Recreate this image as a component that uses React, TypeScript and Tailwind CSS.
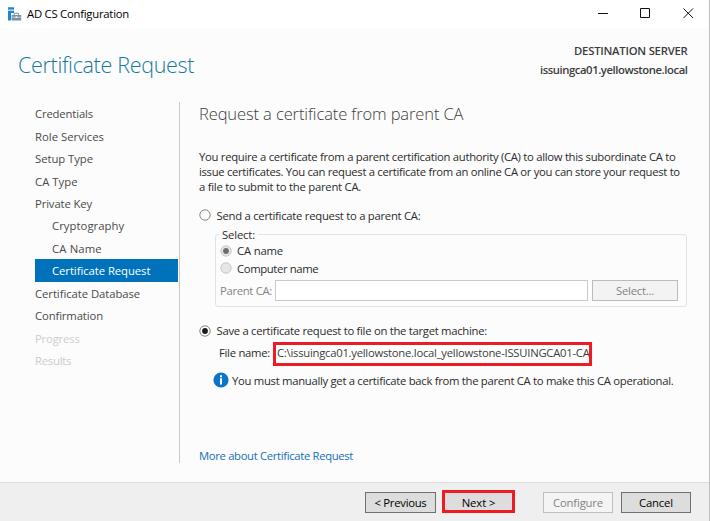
import type { ReactNode } from "react";

type NavItem = { label: string; className: string };

const steps: NavItem[] = [
  { label: "Credentials", className: "tracking-[-0.155px] text-[#4a4a4a]" },
  { label: "Role Services", className: "tracking-[0.02px] text-[#4a4a4a]" },
  { label: "Setup Type", className: "tracking-[-0.05px] text-[#4a4a4a]" },
  { label: "CA Type", className: "tracking-[0.03px] text-[#4a4a4a]" },
  { label: "Private Key", className: "tracking-[-0.13px] text-[#4a4a4a]" },
  { label: "Cryptography", className: "pl-[17px] tracking-[0.05px] text-[#4a4a4a]" },
  { label: "CA Name", className: "pl-[17px] tracking-[0.15px] text-[#4a4a4a]" },
  {
    label: "Certificate Request",
    className: "pl-[17px] tracking-[-0.06px] bg-[#0072bc] text-white",
  },
  { label: "Certificate Database", className: "tracking-[-0.06px] text-[#4a4a4a]" },
  { label: "Confirmation", className: "tracking-[-0.125px] text-[#4a4a4a]" },
  { label: "Progress", className: "tracking-[-0.18px] text-[#cdcdcd]" },
  { label: "Results", className: "tracking-[-0.25px] text-[#cdcdcd]" },
];

function ServerIcon() {
  return (
    <svg width="14" height="14" viewBox="0 0 14 14" className="block">
      <path d="M0 0.3h6v2.4H0zM0 3.7h6v2.4H3v7.3H0z" fill="#1c87d3" />
      <path d="M0 2.7h6v1H0z" fill="#a5d2ef" />
      <path d="M6.2 8V6.2h4.2V8" fill="none" stroke="#7890a2" strokeWidth="1" />
      <rect x="3.6" y="8" width="9.6" height="5.4" rx="0.5" fill="#7890a2" />
      <path d="M3.6 10.2h9.6" stroke="#d5e0e8" strokeWidth="0.8" />
      <rect x="7.6" y="9.5" width="1.6" height="1.5" fill="#fff" />
    </svg>
  );
}

function Radio({ checked = false, disabled = false }: { checked?: boolean; disabled?: boolean }) {
  return (
    <svg width="12" height="12" viewBox="0 0 12 12" className="block shrink-0">
      <circle
        cx="6"
        cy="6"
        r="5.2"
        fill={disabled ? "#e6e6e6" : "#fff"}
        stroke={disabled ? "#c3c3c3" : "#777"}
        strokeWidth="0.9"
      />
      {checked && <circle cx="6" cy="6" r="2.9" fill={disabled ? "#6d6d6d" : "#1c1c1c"} />}
    </svg>
  );
}

function Button({ className, children }: { className: string; children: ReactNode }) {
  return (
    <button type="button" className={`flex items-center justify-center ${className}`}>
      {children}
    </button>
  );
}

export default function App() {
  return (
    <div className="flex h-[521px] w-[710px] flex-col overflow-hidden whitespace-nowrap border-r border-[#bdbdbd] bg-[#fcfcfc] font-['Open_Sans','Noto_Sans',sans-serif] text-[11.3px] leading-[15px] text-[#2b2b2b]">
      <header className="flex h-[28px] shrink-0 items-center bg-white pl-[8px]">
        <ServerIcon />
        <span className="-mt-[2px] ml-[5px] tracking-[-0.24px] text-black">AD CS Configuration</span>
        <svg width="98" height="12" viewBox="0 0 98 12" className="-mt-[2px] ml-auto mr-[14px] block" fill="none" stroke="#111">
          <path d="M1 6.5h10" />
          <path d="M43.5 1.5h9v9h-9z" />
          <path d="M86.5 1.5l9.5 9.5M96 1.5l-9.5 9.5" />
        </svg>
      </header>

      <div className="flex h-[74px] shrink-0 justify-between pl-[18px] pr-[21.5px]">
        <h1 className="pt-[23px] text-[21.5px] font-light leading-[28px] tracking-[-0.32px] text-[#137a9c]">
          Certificate Request
        </h1>
        <div className="flex flex-col items-end pt-[13px] font-semibold leading-[19px] text-[#3c3c3c]">
          <div className="tracking-[-0.24px]">DESTINATION SERVER</div>
          <div className="tracking-[-0.43px]">issuingca01.yellowstone.local</div>
        </div>
      </div>

      <div className="flex h-[380px] shrink-0">
        <nav className="ml-[35px] w-[143px] shrink-0">
          {steps.map((step) => (
            <div key={step.label} className={`flex h-[22.45px] items-center pt-px ${step.className}`}>
              {step.label}
            </div>
          ))}
        </nav>
        <div className="ml-px h-[361px] w-px shrink-0 bg-[#c9c9c9]" />

        <main className="ml-[19px] flex w-[488px] flex-col">
          <h2 className="h-[24px] text-[16.5px] font-light leading-[24px] tracking-[-0.11px] text-[#3c3c3c]">
            Request a certificate from parent CA
          </h2>
          <div className="mt-[23px]">
            <p className="tracking-[-0.293px]">
              You require a certificate from a parent certification authority (CA) to allow this subordinate CA to
            </p>
            <p className="tracking-[-0.315px]">
              issue certificates. You can request a certificate from an online CA or you can store your request to
            </p>
            <p className="tracking-[-0.25px]">a file to submit to the parent CA.</p>
          </div>

          <label className="mt-[13px] flex h-[16px] items-center tracking-[-0.267px]">
            <Radio />
            <span className="ml-[5.5px]">Send a certificate request to a parent CA:</span>
          </label>

          <fieldset className="ml-[16px] mt-[4px] h-[80px] w-[472px] rounded-[3px] border border-[#dbe6ea] pl-[4px]">
            <legend className="ml-[-1px] h-[15px] px-[3px] tracking-[-0.17px]">Select:</legend>
            <label className="flex h-[17px] items-center tracking-[-0.17px]">
              <Radio checked disabled />
              <span className="ml-[5px]">CA name</span>
            </label>
            <label className="flex h-[18px] items-center tracking-[-0.38px]">
              <Radio disabled />
              <span className="ml-[5px]">Computer name</span>
            </label>
            <div className="mt-[3px] flex h-[21px] items-center text-[#838383]">
              <span className="w-[55px] tracking-[-0.32px]">Parent CA:</span>
              <span className="h-[21px] w-[313px] border border-[#c9c9c9] bg-white" />
              <Button className="ml-[4px] h-[21px] w-[86px] border border-[#b9bcbd] bg-[#f3f3f3] tracking-[-0.23px]">
                Select...
              </Button>
            </div>
          </fieldset>

          <label className="mt-[15px] flex h-[17px] items-center tracking-[-0.29px]">
            <Radio checked />
            <span className="ml-[5.5px]">Save a certificate request to file on the target machine:</span>
          </label>
          <div className="mt-[3px] flex h-[24px] pl-[20px]">
            <span className="w-[54px] pt-[3px] tracking-[-0.28px]">File name:</span>
            <span className="h-[24px] w-[319px] overflow-hidden border-[3px] border-[#ed1c24] bg-white pl-px tracking-[-0.265px] text-[#3c3c3c]">
              C:\issuingca01.yellowstone.local_yellowstone-ISSUINGCA01-CA
            </span>
          </div>
          <div className="mt-[6px] flex h-[16px] items-center pl-[14px]">
            <svg width="16" height="16" viewBox="0 0 16 16" className="block shrink-0">
              <circle cx="8" cy="8" r="7.6" fill="#0b76c8" />
              <path d="M7 3.2h2v2H7zM7 6.3h2v6.2H7z" fill="#fff" />
            </svg>
            <span className="ml-[3px] tracking-[-0.298px]">
              You must manually get a certificate back from the parent CA to make this CA operational.
            </span>
          </div>
          <a className="mt-[60px] tracking-[-0.34px] text-[#1570b8]">More about Certificate Request</a>
        </main>
      </div>

      <footer className="flex h-[39px] shrink-0 border-t border-[#dcdcdc] bg-[#efefef] pl-[365px] pt-[9px] text-black">
        <Button className="h-[21px] w-[71px] border border-[#707070] bg-[#dddddd] tracking-[-0.28px]">&lt; Previous</Button>
        <Button className="-mt-[2px] ml-[6px] h-[23px] w-[73px] border-[3px] border-[#ed1c24] bg-[#dddddd] pt-[2px] tracking-[-0.1px]">
          Next &gt;
        </Button>
        <Button className="ml-[28px] h-[21px] w-[70px] border border-[#bfbfbf] bg-[#f4f4f4] tracking-[-0.17px] text-[#838383]">
          Configure
        </Button>
        <Button className="ml-[8px] h-[21px] w-[70px] border border-[#707070] bg-[#dddddd] tracking-[-0.15px]">
          Cancel
        </Button>
      </footer>
    </div>
  );
}
